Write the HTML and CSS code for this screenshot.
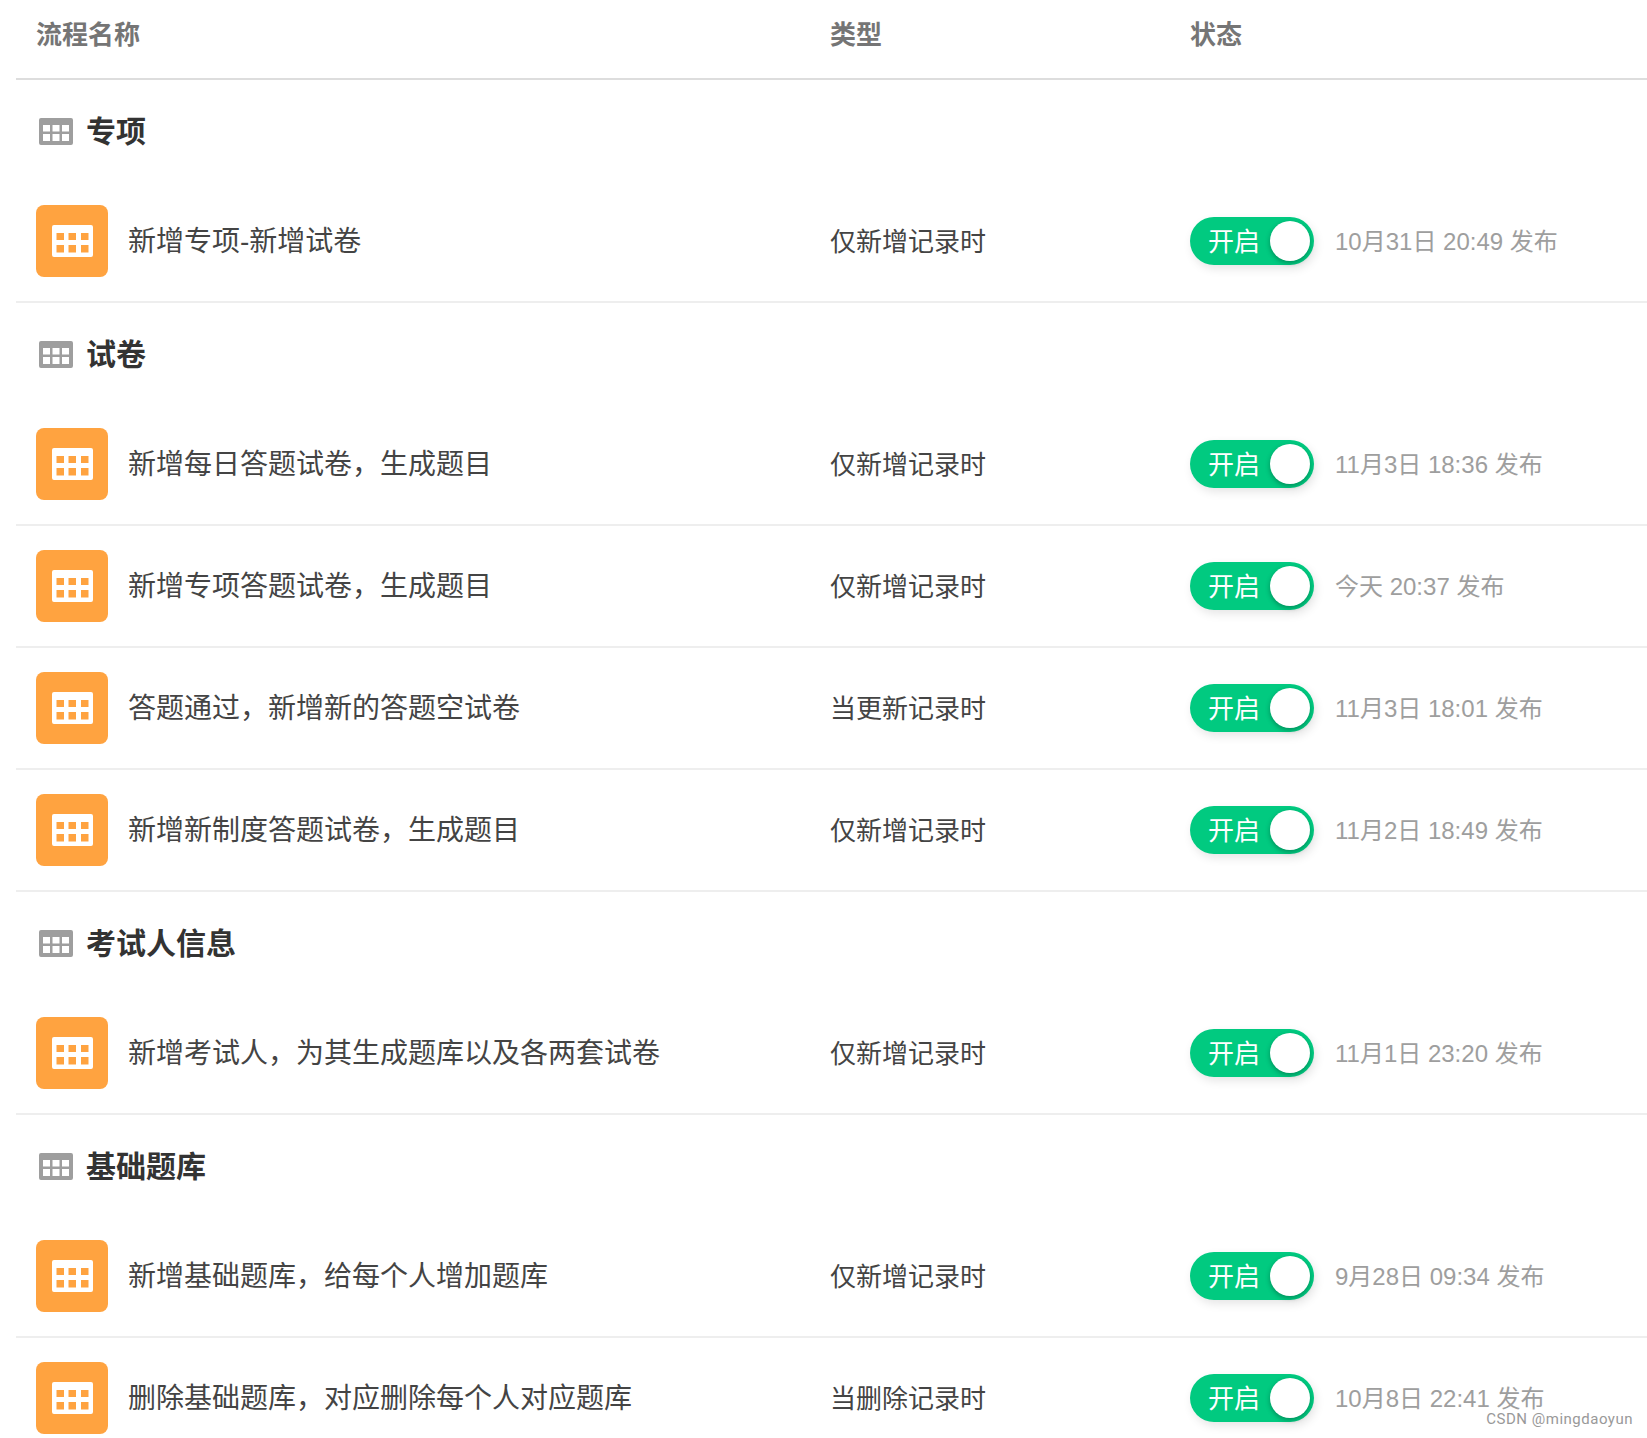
FILE: index.html
```html
<!DOCTYPE html>
<html lang="zh-CN">
<head>
    <meta charset="UTF-8">
    <title>流程列表</title>
    <link rel="stylesheet" href="styles.css">
</head>
<body>
    <svg class="defs" width="0" height="0">
        <symbol id="grid-gray" viewBox="0 0 34 27">
            <path fill-rule="evenodd" d="M2 0H32A2 2 0 0 1 34 2V25A2 2 0 0 1 32 27H2A2 2 0 0 1 0 25V2A2 2 0 0 1 2 0ZM4 7V13.500H11V7ZM13.500 7V13.500H20.500V7ZM23 7V13.500H30V7ZM4 16V23H11V16ZM13.500 16V23H20.500V16ZM23 16V23H30V16Z"/>
        </symbol>
        <symbol id="grid-white" viewBox="0 0 41 32">
            <path fill-rule="evenodd" d="M2 0H39A2 2 0 0 1 41 2V30A2 2 0 0 1 39 32H2A2 2 0 0 1 0 30V2A2 2 0 0 1 2 0ZM4.500 8V15H12V8ZM16.500 8V15H24V8ZM29 8V15H36.500V8ZM4.500 20V27.500H12V20ZM16.500 20V27.500H24V20ZM29 20V27.500H36.500V20Z"/>
        </symbol>
    </svg>

    <div class="list">
        <!-- En-tête -->
        <div class="row-head">
            <div>流程名称</div>
            <div>类型</div>
            <div>状态</div>
        </div>

        <!-- 专项 -->
        <div class="group"><svg class="group-icon"><use href="#grid-gray"/></svg><span>专项</span></div>
        <div class="row">
            <div class="name"><span class="icon"><svg><use href="#grid-white"/></svg></span><span class="label">新增专项-新增试卷</span></div>
            <div class="type">仅新增记录时</div>
            <div class="state"><span class="switch"><b>开启</b><i></i></span><span class="date">10月31日 20:49 发布</span></div>
        </div>

        <!-- 试卷 -->
        <div class="group"><svg class="group-icon"><use href="#grid-gray"/></svg><span>试卷</span></div>
        <div class="row">
            <div class="name"><span class="icon"><svg><use href="#grid-white"/></svg></span><span class="label">新增每日答题试卷，生成题目</span></div>
            <div class="type">仅新增记录时</div>
            <div class="state"><span class="switch"><b>开启</b><i></i></span><span class="date">11月3日 18:36 发布</span></div>
        </div>
        <div class="row">
            <div class="name"><span class="icon"><svg><use href="#grid-white"/></svg></span><span class="label">新增专项答题试卷，生成题目</span></div>
            <div class="type">仅新增记录时</div>
            <div class="state"><span class="switch"><b>开启</b><i></i></span><span class="date">今天 20:37 发布</span></div>
        </div>
        <div class="row">
            <div class="name"><span class="icon"><svg><use href="#grid-white"/></svg></span><span class="label">答题通过，新增新的答题空试卷</span></div>
            <div class="type">当更新记录时</div>
            <div class="state"><span class="switch"><b>开启</b><i></i></span><span class="date">11月3日 18:01 发布</span></div>
        </div>
        <div class="row">
            <div class="name"><span class="icon"><svg><use href="#grid-white"/></svg></span><span class="label">新增新制度答题试卷，生成题目</span></div>
            <div class="type">仅新增记录时</div>
            <div class="state"><span class="switch"><b>开启</b><i></i></span><span class="date">11月2日 18:49 发布</span></div>
        </div>

        <!-- 考试人信息 -->
        <div class="group"><svg class="group-icon"><use href="#grid-gray"/></svg><span>考试人信息</span></div>
        <div class="row">
            <div class="name"><span class="icon"><svg><use href="#grid-white"/></svg></span><span class="label">新增考试人，为其生成题库以及各两套试卷</span></div>
            <div class="type">仅新增记录时</div>
            <div class="state"><span class="switch"><b>开启</b><i></i></span><span class="date">11月1日 23:20 发布</span></div>
        </div>

        <!-- 基础题库 -->
        <div class="group"><svg class="group-icon"><use href="#grid-gray"/></svg><span>基础题库</span></div>
        <div class="row">
            <div class="name"><span class="icon"><svg><use href="#grid-white"/></svg></span><span class="label">新增基础题库，给每个人增加题库</span></div>
            <div class="type">仅新增记录时</div>
            <div class="state"><span class="switch"><b>开启</b><i></i></span><span class="date">9月28日 09:34 发布</span></div>
        </div>
        <div class="row">
            <div class="name"><span class="icon"><svg><use href="#grid-white"/></svg></span><span class="label">删除基础题库，对应删除每个人对应题库</span></div>
            <div class="type">当删除记录时</div>
            <div class="state"><span class="switch"><b>开启</b><i></i></span><span class="date">10月8日 22:41 发布</span></div>
        </div>
    </div>

    <div class="watermark">CSDN @mingdaoyun</div>
</body>
</html>
```

FILE: styles.css
```css
html, body {
    margin: 0;
    height: 1438px;
    overflow: hidden;
    background-color: #fff;
    font-family: "Liberation Sans", "Noto Sans CJK SC", sans-serif;
}
.defs {
    display: block;
}
.list {
    margin-left: 16px;
}

/* Lignes */
.row-head, .row {
    display: grid;
    grid-template-columns: 794px 360px 1fr;
    padding-left: 20px;
    align-items: center;
}
.row-head {
    height: 64px;
    padding-bottom: 14px;
    border-bottom: 2px solid #ddd;
    font-size: 26px;
    font-weight: bold;
    color: #757575;
}
.row {
    height: 120px;
    border-bottom: 2px solid #eee;
    color: #444;
}

/* Groupes */
.group {
    display: flex;
    align-items: center;
    height: 101px;
    padding-left: 23px;
    font-size: 30px;
    font-weight: bold;
    color: #333;
}
.group span {
    margin-bottom: 4px;
}
.group-icon {
    width: 34px;
    height: 27px;
    margin-top: 2px;
    margin-right: 13px;
    fill: #9e9e9e;
}

/* Nom du flux */
.name {
    display: flex;
    align-items: center;
    font-size: 28px;
}
.label {
    margin-bottom: 4px;
}
.icon {
    display: flex;
    align-items: center;
    justify-content: center;
    width: 72px;
    height: 72px;
    margin-right: 20px;
    background-color: #ffa340;
    border-radius: 8px;
}
.icon svg {
    width: 41px;
    height: 32px;
    fill: #fff;
}
.type {
    margin-bottom: 4px;
    font-size: 26px;
}

/* Etat */
.state {
    display: flex;
    align-items: center;
}
.switch {
    display: flex;
    align-items: center;
    justify-content: space-between;
    box-sizing: border-box;
    width: 124px;
    height: 48px;
    padding: 0 4px 0 18px;
    background-color: #01ca80;
    border-radius: 24px;
    color: #fff;
    font-size: 26px;
    box-shadow: 2px 4px 10px rgba(0, 0, 0, 0.1);
}
.switch b {
    margin-bottom: 4px;
    font-weight: normal;
}
.switch i {
    width: 40px;
    height: 40px;
    background-color: #fff;
    border-radius: 50%;
    box-shadow: 0 2px 5px rgba(0, 0, 0, 0.3);
}
.date {
    margin-left: 21px;
    margin-bottom: 4px;
    font-size: 24px;
    color: #9e9e9e;
}

.watermark {
    position: absolute;
    right: 14px;
    bottom: 10px;
    font-family: Roboto, sans-serif;
    font-size: 15px;
    letter-spacing: 0.5px;
    color: #999;
}
```
